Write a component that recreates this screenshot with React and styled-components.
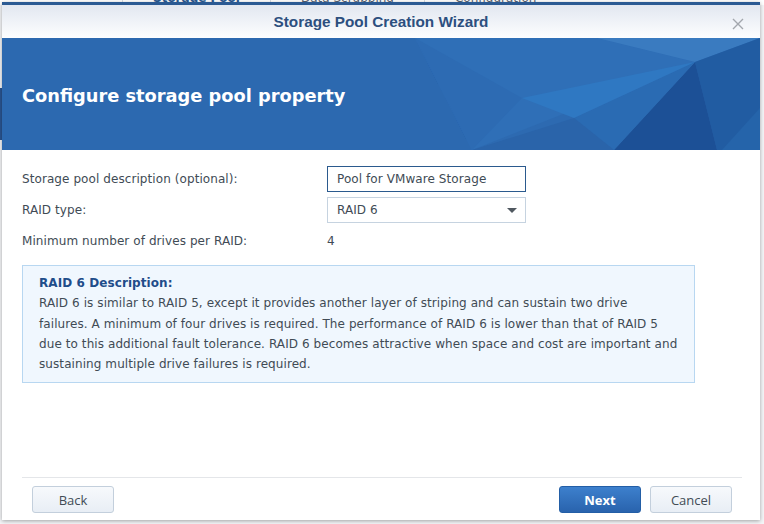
import React from 'react';
import styled, { createGlobalStyle } from 'styled-components';

const GlobalStyle = createGlobalStyle`
  html, body {
    margin: 0;
    padding: 0;
    width: 764px;
    height: 524px;
    overflow: hidden;
    background: #ffffff;
  }
  * { box-sizing: border-box; }
`;

const Desktop = styled.div`
  position: relative;
  display: flex;
  flex-direction: column;
  width: 764px;
  height: 524px;
  overflow: hidden;
  background: #f4f5f7;
  font-family: "DejaVu Sans", Verdana, sans-serif;
`;

const AppTabs = styled.div`
  display: flex;
  margin-top: -9px;
  padding-left: 122px;
  height: 14px;
  background: #fff;
`;

const AppTab = styled.div`
  padding: 0 30px;
  border-left: 1px solid #d6dbe2;
  font-size: 12px;
  line-height: 14px;
  color: ${p => (p.active ? '#2b5a93' : '#556070')};
  font-weight: ${p => (p.active ? 'bold' : 'normal')};
`;

const AppBanner = styled.div`
  margin-top: 83px;
  width: 20px;
  height: 52px;
  background: #2a5592;
`;

const Dialog = styled.div`
  position: absolute;
  top: 2px;
  left: 2px;
  width: 758px;
  height: 518px;
  display: flex;
  flex-direction: column;
  background: #fff;
  border-top: 3px solid #2b5a93;
  box-shadow: 0 1px 4px rgba(0, 0, 0, 0.35);
`;

const TitleBar = styled.div`
  position: relative;
  height: 33px;
  display: flex;
  align-items: center;
  justify-content: center;
  background: linear-gradient(#e2e7f0, #fdfeff);
`;

const Title = styled.div`
  font-family: "Liberation Sans", Arial, sans-serif;
  font-weight: bold;
  font-size: 15.3px;
  color: #2c4f7f;
`;

const CloseButton = styled.div`
  position: absolute;
  right: 16px;
  top: 10px;
  width: 12px;
  height: 12px;
`;

const Banner = styled.div`
  position: relative;
  height: 112px;
  background: #2d6ab1;
  display: flex;
  align-items: center;
  padding: 2px 20px 0;
  overflow: hidden;
`;

const BannerArt = styled.svg`
  position: absolute;
  top: 0;
  left: 0;
`;

const Heading = styled.h1`
  position: relative;
  margin: 0;
  font-size: 17.8px;
  font-weight: bold;
  color: #fff;
`;

const Body = styled.div`
  flex: 1;
  padding: 16px 20px 0;
  display: flex;
  flex-direction: column;
  letter-spacing: 0.08px;
`;

const Form = styled.div`
  display: flex;
  flex-direction: column;
  gap: 5px;
`;

const Row = styled.div`
  display: flex;
  align-items: center;
  height: 26px;
`;

const Label = styled.div`
  width: 305px;
  font-size: 12px;
  color: #414b55;
`;

const Value = styled.div`
  font-size: 12px;
  color: #414b55;
`;

const TextField = styled.div`
  width: 199px;
  height: 26px;
  display: flex;
  align-items: center;
  padding: 0 9px;
  border: 1px solid ${p => (p.focused ? '#2b5a8e' : '#c6d3e0')};
  font-size: 12px;
  color: #414b55;
  background: #fff;
`;

const SelectField = styled(TextField)`
  justify-content: space-between;
  padding-right: 8px;
`;

const Caret = styled.span`
  width: 0;
  height: 0;
  border-left: 5px solid transparent;
  border-right: 5px solid transparent;
  border-top: 5px solid #505860;
`;

const InfoBox = styled.div`
  margin-top: 11px;
  width: 673px;
  padding: 7px 16px 8px;
  background: #f0f7fe;
  border: 1px solid #b8d7f1;
  font-size: 12px;
  line-height: 20.3px;
  color: #414b55;
`;

const InfoTitle = styled.div`
  font-weight: bold;
  color: #1f4d8a;
`;

const Footer = styled.div`
  margin: 0 18px 0 20px;
  padding: 8px 10px 7px;
  border-top: 1px solid #e4e6e9;
  display: flex;
  align-items: center;
`;

const Spacer = styled.div`
  flex: 1;
`;

const Button = styled.button`
  width: 82px;
  height: 27px;
  margin-left: ${p => (p.gap ? '9px' : '0')};
  border-radius: 3px;
  font-family: "Open Sans", "DejaVu Sans", sans-serif;
  font-size: 13px;
  cursor: pointer;
  border: 1px solid ${p => (p.primary ? '#235ea6' : '#c3cfdc')};
  background: ${p =>
    p.primary
      ? 'linear-gradient(#3d80cd, #2963ad)'
      : 'linear-gradient(#f7f9fc, #e8eef5)'};
  color: ${p => (p.primary ? '#fff' : '#414b55')};
  font-weight: ${p => (p.primary ? 'bold' : 'normal')};
`;

const facets = [
  { points: '0,0 413,0 470,112 0,112', fill: '#2c69b0' },
  { points: '413,0 595,0 693,24 470,112', fill: '#2f6fb7' },
  { points: '595,0 758,0 693,24', fill: '#3a7bc0' },
  { points: '693,24 758,0 758,112 715,112', fill: '#215ca2' },
  { points: '693,24 715,112 612,112', fill: '#1c5096' },
  { points: '693,24 612,112 572,80', fill: '#2a6bb3' },
  { points: '470,112 572,80 612,112', fill: '#2a64aa' },
  { points: '520,60 693,24 572,80', fill: '#2f78c2' },
  { points: '413,0 520,60 470,112', fill: '#2d6bb3' },
  { points: '720,112 758,70 758,112', fill: '#2564aa' },
];

const CloseIcon = () => (
  <CloseButton>
    <svg width="12" height="12" viewBox="0 0 12 12">
      <path d="M1 1 L11 11 M11 1 L1 11" stroke="#a3a7ad" strokeWidth="1.4" fill="none" />
    </svg>
  </CloseButton>
);

const App = () => {
  return (
    <>
      <GlobalStyle />
      <Desktop>
        <AppTabs>
          <AppTab active>Storage Pool</AppTab>
          <AppTab>Data Scrubbing</AppTab>
          <AppTab>Configuration</AppTab>
        </AppTabs>
        <AppBanner />
        <Dialog>
          <TitleBar>
            <Title>Storage Pool Creation Wizard</Title>
            <CloseIcon />
          </TitleBar>
          <Banner>
            <BannerArt width="758" height="112" viewBox="0 0 758 112">
              {facets.map((f, i) => (
                <polygon key={i} points={f.points} fill={f.fill} />
              ))}
            </BannerArt>
            <Heading>Configure storage pool property</Heading>
          </Banner>
          <Body>
            <Form>
              <Row>
                <Label>Storage pool description (optional):</Label>
                <TextField focused>Pool for VMware Storage</TextField>
              </Row>
              <Row>
                <Label>RAID type:</Label>
                <SelectField>
                  RAID 6
                  <Caret />
                </SelectField>
              </Row>
              <Row>
                <Label>Minimum number of drives per RAID:</Label>
                <Value>4</Value>
              </Row>
            </Form>
            <InfoBox>
              <InfoTitle>RAID 6 Description:</InfoTitle>
              RAID 6 is similar to RAID 5, except it provides another layer of striping and can sustain two drive
              failures. A minimum of four drives is required. The performance of RAID 6 is lower than that of RAID 5
              due to this additional fault tolerance. RAID 6 becomes attractive when space and cost are important and
              sustaining multiple drive failures is required.
            </InfoBox>
          </Body>
          <Footer>
            <Button>Back</Button>
            <Spacer />
            <Button primary>Next</Button>
            <Button gap>Cancel</Button>
          </Footer>
        </Dialog>
      </Desktop>
    </>
  );
};

export default App;
